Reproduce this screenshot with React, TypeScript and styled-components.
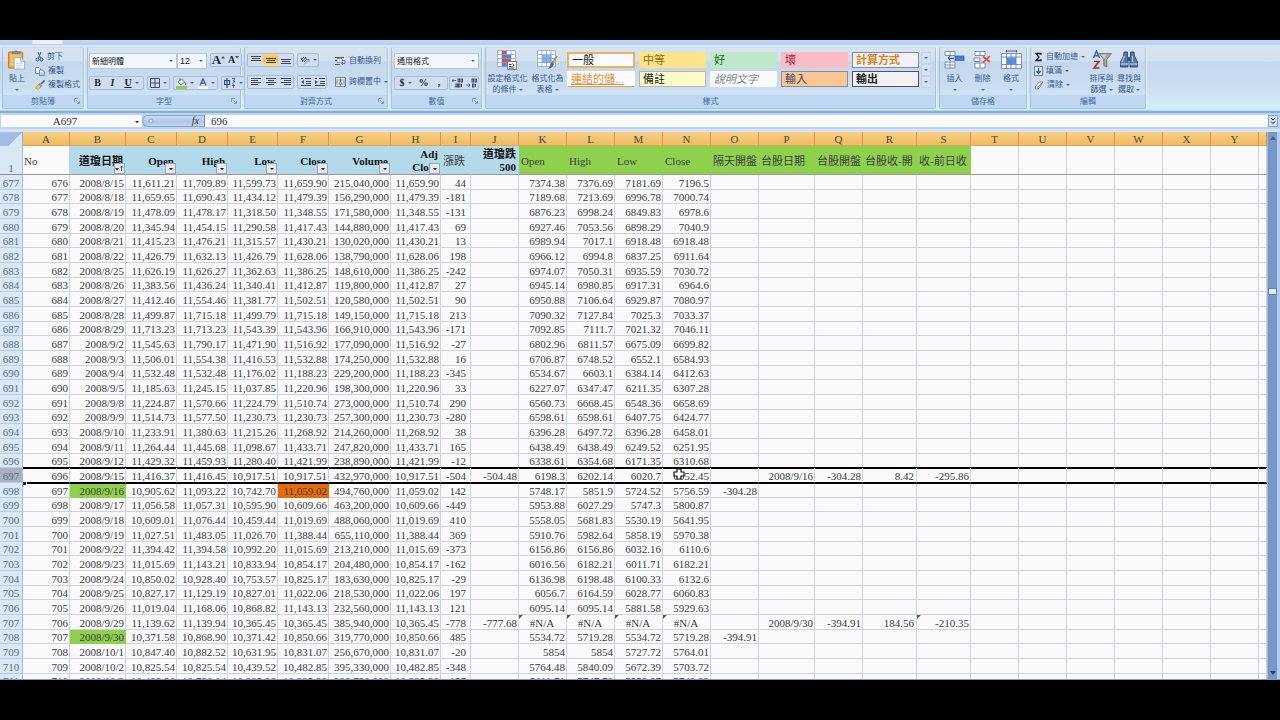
import React from 'react';
import styled, { createGlobalStyle, css } from 'styled-components';

const Global = createGlobalStyle`
  * { box-sizing: border-box; }
  body { margin: 0; background: #000; font-family: "Liberation Sans", "Noto Sans CJK TC", sans-serif; }
  button, input, select { font: inherit; color: inherit; margin: 0; padding: 0; border: 0; background: none; border-radius: 0; }
`;

const serif = '"Liberation Serif", "Noto Sans CJK TC", serif';

const Page = styled.main`
  height: 100vh;
  padding: 40px 0;
  background: #000;
`;
const Window = styled.div`
  height: 100%;
  display: flex;
  flex-direction: column;
  overflow: hidden;
  background: #bcd5f3;
`;
const TabStrip = styled.nav`
  flex: none;
  display: flex;
  height: 5px;
  padding-left: 32px;
  background: linear-gradient(#bddcfb, #b4d2f5);
  border-bottom: 1px solid #c3d3ea;
`;
const ActiveTab = styled.span`
  width: 31px;
  background: #e6effa;
  border: 1px solid #d4e6fb;
  border-width: 0 1px;
`;

/* ---------- ribbon ---------- */
const Ribbon = styled.section`
  flex: none;
  display: flex;
  gap: 3px;
  height: 66px;
  padding: 2px 2px 1px;
  background: linear-gradient(#d9e4f2 0, #d3dfef 16px, #c5d6eb 17px, #cbdff2 45px, #d3ebf8 60px, #c8f0fa 66px);
  border-bottom: 1px solid #b4dcef;
  overflow: hidden;
`;
const GroupBox = styled.section<{ $w: number }>`
  flex: none;
  width: ${p => p.$w}px;
  display: flex;
  flex-direction: column;
  border: 1px solid #a9c1dd;
  border-top-color: #cfdcec;
  border-radius: 2px;
  box-shadow: 1px 0 0 #eaf3fb;
`;
const GroupBody = styled.div<{ $gap?: number; $pad?: number }>`
  flex: 1;
  min-height: 0;
  display: flex;
  gap: ${p => p.$gap ?? 4}px;
  padding: 2px ${p => p.$pad ?? 4}px 0;
`;
const GroupLabel = styled.footer`
  flex: none;
  position: relative;
  height: 13px;
  line-height: 14px;
  background: #bfd7f2;
  color: #4468a3;
  font-size: 8px;
  text-align: center;
`;
const Launcher = styled.button`
  position: absolute;
  right: 3px;
  top: 3px;
  width: 6px;
  height: 6px;
  display: flex;
`;
const Col = styled.div<{ $gap?: number; $top?: number }>`
  display: flex;
  flex-direction: column;
  gap: ${p => p.$gap ?? 0}px;
  padding-top: ${p => p.$top ?? 0}px;
`;
const Row = styled.div<{ $gap?: number }>`
  display: flex;
  gap: ${p => p.$gap ?? 3}px;
`;
const BigBtn = styled.button<{ $w: number }>`
  width: ${p => p.$w}px;
  display: flex;
  flex-direction: column;
  align-items: center;
  font-size: 8px;
  line-height: 10px;
  color: #35588f;
  white-space: nowrap;
  svg { flex: none; margin-bottom: 3px; }
`;
const BigText = styled.span`
  display: flex;
  align-items: center;
  gap: 2px;
  height: 10px;
  margin-top: 1px;
`;
const SmallBtn = styled.button<{ $h?: number }>`
  height: ${p => p.$h ?? 14}px;
  display: flex;
  align-items: center;
  gap: 3px;
  font-size: 8px;
  line-height: 12px;
  color: #35588f;
  white-space: nowrap;
`;
const Tri = styled.i<{ $dark?: boolean }>`
  flex: none;
  width: 0;
  height: 0;
  border: 2px solid transparent;
  border-top-color: ${p => (p.$dark ? '#111' : '#4a6a9a')};
  border-bottom: 0;
`;
const Field = styled.label<{ $w: number; $size?: number }>`
  position: relative;
  display: flex;
  align-items: center;
  width: ${p => p.$w}px;
  height: 16px;
  background: #f1f6fd;
  border: 1px solid #b3c8e4;
  font-size: ${p => p.$size ?? 8}px;
  color: #222;
  select { appearance: none; flex: 1; width: 0; height: 100%; padding-left: 2px; }
  i { position: absolute; right: 3px; top: 6px; }
`;
const ToolBox = styled.div`
  display: flex;
  height: 14px;
  border: 1px solid #a5bddd;
  border-radius: 2px;
  background: #cfddef;
`;
const Tool = styled.button<{ $w: number; $on?: boolean; $size?: number; $gap?: number; $look?: 'bold' | 'italic' | 'under' }>`
  width: ${p => p.$w}px;
  display: flex;
  align-items: center;
  justify-content: center;
  gap: ${p => p.$gap ?? 3}px;
  && {
    font-family: "Liberation Serif", serif;
    font-size: ${p => p.$size ?? 10}px;
    font-weight: bold;
    line-height: 12px;
    color: #1d2430;
    ${p => p.$on && css`background: linear-gradient(#fbd38e, #f9b64c 50%, #fde08a);`}
    ${p => p.$look === 'italic' && css`font-style: italic;`}
    ${p => p.$look === 'under' && css`text-decoration: underline;`}
  }
`;
const Divider = styled.span`
  width: 1px;
  margin: 4px 0 6px;
  background: #9db6d6;
`;
const Gallery = styled.div`
  display: grid;
  grid-template-columns: 68px repeat(4, 67px);
  grid-auto-rows: 16px;
  gap: 3px 4px;
  padding-top: 2px;
`;
const StyleCell = styled.button<{ $bg: string; $fg: string; $edge?: string; $look?: string }>`
  && {
    padding-left: 3px;
    text-align: left;
    font-size: 11px;
    line-height: 13px;
    white-space: nowrap;
    overflow: hidden;
    background: ${p => p.$bg};
    color: ${p => p.$fg};
    border: 1px solid ${p => p.$edge ?? p.$bg};
    ${p => p.$look === 'current' && css`border: 2px solid #e8b35c; line-height: 12px;`}
    ${p => p.$look === 'bold' && css`font-weight: bold;`}
    ${p => p.$look === 'italic' && css`font-style: italic;`}
    ${p => p.$look === 'link' && css`border-bottom: 1px solid #e6a050; text-decoration: underline;`}
  }
`;
const GalleryNav = styled.div`
  display: flex;
  flex-direction: column;
  width: 10px;
  margin-top: 2px;
  height: 36px;
  button {
    flex: 1;
    display: flex;
    align-items: center;
    justify-content: center;
    border: 1px solid #c3d3e8;
    background: #d5e1f0;
  }
`;

/* ---------- formula bar ---------- */
const FormulaBar = styled.div`
  flex: none;
  display: flex;
  height: 21px;
  padding: 2px 2px 2px 1px;
  border-top: 2px solid #8badcf;
  border-bottom: 3px solid #d4e3f6;
  background: #bdd3ef;
  font-family: ${serif};
  font-size: 11px;
  color: #333;
`;
const NameBox = styled.label`
  position: relative;
  display: flex;
  width: 141px;
  background: #fafbfd;
  input { width: 128px; text-align: center; }
  i { position: absolute; right: 3px; top: 6px; }
`;
const FxArea = styled.div`
  display: flex;
  align-items: center;
  justify-content: space-between;
  width: 62px;
  padding: 0 5px;
  border: 1px solid #86a5d0;
  border-right: 0;
  border-radius: 7px 0 0 7px;
  background: linear-gradient(#cadbf2, #aec6e8 60%, #c4d6ee);
  button { font-style: italic; font-size: 10px; line-height: 12px; }
`;
const FormulaInput = styled.input`
  && {
    flex: 1;
    min-width: 0;
    padding-left: 6px;
    background: #fafbfd;
    border-left: 1px solid #6d88b0;
  }
`;
const ExpandBtn = styled.button`
  && {
    width: 10px;
    display: flex;
    align-items: center;
    justify-content: center;
    border: 1px solid #86a5d0;
    background: #d3e2f6;
  }
`;

/* ---------- sheet ---------- */
const SheetArea = styled.div`
  flex: 1;
  min-height: 0;
  display: flex;
  overflow: hidden;
  border-bottom: 1px solid #7f9dc0;
`;
const GridPane = styled.div`
  flex: 1;
  min-width: 0;
  overflow: hidden;
  background: #fafafc;
`;
const Table = styled.table`
  width: 100%;
  table-layout: fixed;
  border-collapse: separate;
  border-spacing: 0;
  font-family: ${serif};
  font-size: 11px;
  color: #3c3c3e;
`;
const ColHead = styled.th`
  height: 14px;
  padding: 2px 0 0;
  font-weight: normal;
  line-height: 11px;
  color: #4c453a;
  background: linear-gradient(#f8cf85, #f0bb62);
  border-right: 1px solid #de9350;
  border-bottom: 1px solid #e0a452;
`;
const Corner = styled.th`
  padding: 0;
  background: linear-gradient(135deg, #a3bce6 0 62%, #dbe7f8 62%);
  border-right: 1px solid #8fb0da;
`;
const RowHead = styled.th<{ $sel?: boolean; $top?: boolean }>`
  padding: 2px 0 0;
  font-weight: normal;
  line-height: 11px;
  vertical-align: ${p => (p.$top ? 'bottom' : 'middle')};
  color: #56707f;
  background: ${p => (p.$sel ? '#aab0c2' : '#d9e8f4')};
  border-right: 1px solid #9cc0dc;
  border-bottom: 1px solid ${p => (p.$top ? '#8c8c92' : '#b0cfe4')};
`;
const FieldHead = styled.td<{ $kind: string }>`
  position: relative;
  height: 29px;
  padding: 2px 2px 0 1px;
  line-height: 13px;
  white-space: nowrap;
  border-bottom: 1px solid #97979d;
  border-right: 1px solid #cdd0e0;
  ${p => p.$kind === 'blue' && css`background: #b3d9ea; border-right-color: #b3d9ea; font-weight: bold; text-align: right; color: #111;`}
  ${p => p.$kind === 'blueLight' && css`background: #b3d9ea; border-right-color: #b3d9ea; padding-left: 2px;`}
  ${p => p.$kind === 'green' && css`background: #8fd14f; border-right-color: #8fd14f; padding-left: 2px;`}
`;
const FilterBtn = styled.button`
  position: absolute;
  right: 0;
  bottom: 0;
  width: 11px;
  height: 11px;
  display: flex;
  align-items: center;
  justify-content: center;
  && { background: #e4e9f2; border: 1px solid #a0a4b0; }
`;
const BodyRow = styled.tr<{ $h: number }>`
  height: ${p => p.$h}px;
`;
const Cell = styled.td<{ $bg?: string; $align?: string; $pad?: number; $sel?: boolean; $flag?: boolean }>`
  position: relative;
  padding: 2px ${p => p.$pad ?? 1}px 0 0;
  line-height: 11px;
  white-space: nowrap;
  text-align: ${p => p.$align ?? 'right'};
  border-right: 1px solid #d0d2e0;
  border-bottom: 1px solid #cfd0e0;
  ${p => p.$bg && css`background: ${p.$bg}; border-color: ${p.$bg};`}
  ${p => p.$sel && css`z-index: 1; border-bottom-color: #000; box-shadow: 0 -1px 0 #000, 0 1px 0 #000, inset 0 1px 0 #000;`}
  ${p => p.$flag && css`
    &::before {
      content: "";
      position: absolute;
      left: 0;
      top: 0;
      border-top: 4px solid #2c7a35;
      border-right: 4px solid transparent;
    }
  `}
`;
const FillHandle = styled.i`
  position: absolute;
  left: 0;
  bottom: -3px;
  width: 4px;
  height: 4px;
  background: #222;
  border: 1px solid #fff;
  border-width: 1px 1px 0 0;
`;
const Pointer = styled.svg`
  position: absolute;
  left: 10px;
  top: 0;
`;
const ScrollBar = styled.div`
  flex: none;
  width: 13px;
  display: flex;
  flex-direction: column;
  align-items: center;
  padding: 4px 0 4px;
  background: #7797c6;
  border-left: 1px solid #9bb6dc;
  border-right: 3px solid #aecbf2;
  button { display: flex; }
`;
const Track = styled.div`
  flex: 1;
  width: 100%;
  display: flex;
  flex-direction: column;
`;
const TrackBefore = styled.span`flex: 148;`;
const TrackAfter = styled.span`flex: 377;`;
const Thumb = styled.span`
  height: 7px;
  background: #e3edfa;
  border: 1px solid #5e7cae;
`;

/* ---------- icons ---------- */
const PasteIcon = () => (
  <svg width="20" height="20" viewBox="0 0 20 21">
    <rect x="1" y="2" width="15" height="17" rx="1" fill="#e9a940" stroke="#b77c24" />
    <rect x="3" y="4" width="11" height="13" fill="#f3c46a" />
    <path d="M5 4V2h2l1-1h2l1 1h2v2z" fill="#8b93a3" stroke="#5b6474" strokeWidth=".6" />
    <path d="M7 8h7l4 4v8H7z" fill="#fbfcff" stroke="#8b9dbd" strokeWidth=".8" />
    <path d="M14 8v4h4" fill="#d5e0f2" stroke="#8b9dbd" strokeWidth=".8" />
    <path d="M9 14h7M9 16h7M9 18h5" stroke="#a9bbd8" strokeWidth=".7" />
  </svg>
);
const CutIcon = () => (
  <svg width="9" height="10" viewBox="0 0 9 10" fill="none">
    <path d="M3 0l2.500 6M6 0L3.500 6" stroke="#3c4f77" />
    <circle cx="2.500" cy="7.500" r="1.500" stroke="#2d4e9b" /><circle cx="6.500" cy="7.500" r="1.500" stroke="#2d4e9b" />
  </svg>
);
const CopyIcon = () => (
  <svg width="10" height="9" viewBox="0 0 10 9" fill="#f4f8ff" stroke="#4f6fa8" strokeWidth=".8">
    <path d="M.5.5h3.500L5.500 2v4.500h-5z" /><path d="M4.500 3h3l2 2v3.500h-5z" /><path d="M5.500 6h3M5.500 7.200h3" strokeWidth=".5" />
  </svg>
);
const BrushIcon = () => (
  <svg width="10" height="10" viewBox="0 0 10 10">
    <path d="M9.500.5L6 4" stroke="#3f5fa0" strokeWidth="1.600" /><path d="M4.500 3l3 3-1.500 1L3.500 4.500z" fill="#8b93a3" />
    <path d="M3.500 4.500L6 7 3 9.500.5 8z" fill="#f1cf4e" stroke="#a8862a" strokeWidth=".6" />
  </svg>
);
const LaunchIcon = () => (
  <svg width="6" height="6" viewBox="0 0 6 6" fill="none" stroke="#6c8cb8"><path d="M.5 4V.5H4M2.500 2.500L5 5M5.500 3v2.500H3" strokeWidth=".8" /></svg>
);
const BorderIcon = () => (
  <svg width="10" height="10" viewBox="0 0 10 10" fill="none" stroke="#3f4c63"><path d="M.5.5h9v9h-9zM5 .5v9M.5 5h9" /></svg>
);
const FillIcon = () => (
  <svg width="11" height="11" viewBox="0 0 11 11">
    <path d="M2 4l3.500-3 3 3-3.500 3z" fill="#eef3fa" stroke="#56657f" strokeWidth=".8" /><path d="M4 0v3" stroke="#56657f" strokeWidth=".8" />
    <path d="M8.500 4q2 1 1 3" stroke="#3b66b5" fill="none" /><rect y="8" width="11" height="3" fill="#8fd14f" />
  </svg>
);
const FontColorIcon = () => (
  <svg width="10" height="11" viewBox="0 0 10 11">
    <path d="M2 7.500L5 .8l3 6.700M3 5.200h4" stroke="#3a5fa8" strokeWidth="1.300" fill="none" /><rect y="8.500" width="10" height="2.500" fill="#f7f8fa" />
  </svg>
);
const LinesIcon = ({ rows, w = 10 }: { rows: [number, number, number][]; w?: number }) => (
  <svg width={w} height="10" viewBox={`0 0 ${w} 10`} stroke="#43464f">
    {rows.map(([x1, x2, y]) => <path key={y} d={`M${x1} ${y + 0.5}H${x2}`} />)}
  </svg>
);
const OrientIcon = () => (
  <svg width="10" height="10" viewBox="0 0 10 10" fill="none" stroke="#3f4c63">
    <path d="M1 5l3-3M2 7l4-5M4 7l3-3M1 3l2 3M5 2l2 3" strokeWidth=".9" /><path d="M4 9.500l5-5M9 7V4.500H6.500" stroke="#6c7c96" strokeWidth=".8" />
  </svg>
);
const IndentIcon = ({ right }: { right?: boolean }) => (
  <svg width="11" height="10" viewBox="0 0 11 10" stroke="#43464f">
    <path d="M5 1.500h6M6 4.500h5M6 6.500h5M1 8.500h10M1 1.500h2" /><path d={right ? 'M1 3v4l3-2z' : 'M4 3v4L1 5z'} fill="#2f5cb0" stroke="none" />
  </svg>
);
const WrapIcon = () => (
  <svg width="11" height="10" viewBox="0 0 11 10" fill="none">
    <path d="M0 1.500h9M0 4.500h8M0 8.500h5" stroke="#53585f" /><path d="M2 2.500h5v4H2z" fill="#dfe7f2" stroke="#777f8c" strokeWidth=".7" />
    <path d="M8 4.500h2v3H6.500M8 6L6.500 7.500 8 9" stroke="#55617a" strokeWidth=".8" />
  </svg>
);
const MergeIcon = () => (
  <svg width="11" height="10" viewBox="0 0 11 10">
    <path d="M.5.5h10v9H.5zM.5 3h10M.5 7h10M5.500.5V3M5.500 7v2.500" fill="#fbfcfe" stroke="#5c6b84" strokeWidth=".8" />
    <path d="M1 5h2M8 5h2" stroke="#2f5cb0" /><path d="M4.500 6.500l1-3 1 3" stroke="#222" strokeWidth=".7" fill="none" />
  </svg>
);
const DecimalIcon = ({ less }: { less?: boolean }) => (
  <svg width="11" height="10" viewBox="0 0 11 10" fill="none" stroke="#343c4e" strokeWidth=".9">
    <path d={less ? 'M0 7h4M2.500 5.500L4 7 2.500 8.500' : 'M0 2.500h4M1.500 1L0 2.500 1.500 4'} stroke="#2f5cb0" />
    <rect x="6" y="1" width="1.500" height="3" /><rect x="9" y="1" width="1.500" height="3" />
    {!less && <rect x="4" y="6" width="1.500" height="3" />}
    <rect x="6.500" y="6" width="1.500" height="3" /><path d="M9.500 9V6M2.800 8.800h.8" />
  </svg>
);
const grid = 'M.5.5h18v16H.5zM.5 4.500h18M.5 8.500h18M.5 12.500h18M5 .5v16M9.500.5v16M14 .5v16';
const CondIcon = () => (
  <svg width="21" height="20" viewBox="0 0 21 20">
    <path d={grid} fill="#fafcff" stroke="#8ea5cc" strokeWidth=".8" />
    <path d="M5 1h4.500v3.500H5zM5 9h9v3.500H5z" fill="#e0503f" /><path d="M5 5h9v3.500H5zM5 13h4.500v3.500H5z" fill="#4f86d8" />
    <rect x="10.500" y="11.500" width="9" height="8" fill="#f4f5f7" stroke="#77808f" />
    <path d="M12 14.500h2.500M12 16.500h2.500M15.500 13.500L17 15l-1.500 1.500M12 18h5" stroke="#333" strokeWidth=".9" fill="none" />
  </svg>
);
const TableIcon = () => (
  <svg width="21" height="20" viewBox="0 0 21 20">
    <path d={grid} fill="#fafcff" stroke="#8ea5cc" strokeWidth=".8" /><path d="M5 5h9.500v8H5z" fill="#6d9fe2" opacity=".8" />
    <path d="M20 6l-5 7" stroke="#c08a48" strokeWidth="2" /><path d="M15.500 12l1.500 2q-1 4-6 5 2-2 2.500-5.500z" fill="#596a87" />
  </svg>
);
const InsertIcon = () => (
  <svg width="21" height="20" viewBox="0 0 21 20">
    <path d="M1 1.500h10v4H1zM6 1.500v4M1 12h10v6H1zM6 12v6M1 15h10" fill="#fafcff" stroke="#7286ab" strokeWidth=".9" />
    <rect x="11" y="6" width="9" height="4.500" fill="#4b7fd9" stroke="#2e55a5" strokeWidth=".7" /><path d="M10 8.300H4M6.500 6L4 8.300l2.500 2.200" stroke="#27406f" fill="none" />
  </svg>
);
const DeleteIcon = () => (
  <svg width="19" height="20" viewBox="0 0 19 20">
    <path d="M2 1.500h10v4H2zM7 1.500v4M2 13h10v5H2zM7 13v5M1 8h6v3.500H1z" fill="#fafcff" stroke="#7286ab" strokeWidth=".9" />
    <path d="M10 6.500l7 5.500M17 6l-7 6.500" stroke="#e04a33" strokeWidth="1.700" />
  </svg>
);
const FormatIcon = () => (
  <svg width="21" height="20" viewBox="0 0 21 20">
    <path d="M.5 3.500h20v15H.5zM.5 7h20M.5 14.500h20M5.500 3v15.500M15 3v15.500M10 3v15.500" fill="#fafcff" stroke="#7286ab" strokeWidth=".9" />
    <rect x="6" y="7.500" width="9" height="7" fill="#5a8fe0" /><path d="M5.500 1h10M5.500 0v2.500M15.500 0v2.500" stroke="#4a5f8a" />
  </svg>
);
const FillDownIcon = () => (
  <svg width="9" height="10" viewBox="0 0 9 10"><rect x=".5" y=".5" width="8" height="9" fill="#e9f1fc" stroke="#6581b3" /><path d="M4.500 2v5M2.300 5l2.200 2.500L6.700 5" stroke="#2456b5" strokeWidth="1.300" fill="none" /></svg>
);
const EraserIcon = () => (
  <svg width="10" height="9" viewBox="0 0 10 9"><path d="M1 6l4-5h4L5.500 6.500 4 8H1.500z" fill="#f7f8fb" stroke="#5d6e8d" strokeWidth=".8" /><path d="M1 6h3l4.500-4.500M4 6v2" stroke="#5d6e8d" strokeWidth=".7" fill="none" /></svg>
);
const SortIcon = () => (
  <svg width="20" height="20" viewBox="0 0 20 20">
    <path d="M1.500 8L4.500 1l3 7M2.500 5.800h4" stroke="#3767b8" strokeWidth="1.500" fill="none" />
    <path d="M2 11.500h5L2 18h5.500" stroke="#a82f2f" strokeWidth="1.600" fill="none" />
    <path d="M7 3.500h12.500l-4.700 6V17l-3-1.500v-6z" fill="#a8a49e" stroke="#6e6a66" strokeWidth=".8" /><path d="M9 4.500h5l-1.500 4" fill="#d9d6d0" />
  </svg>
);
const FindIcon = () => (
  <svg width="20" height="20" viewBox="0 0 20 20">
    <path d="M5 2h3.500v4L9 9v8H1.500v-5L4.500 6zM15 2h-3.500v4L11 9v8h7.500v-5l-3-6z" fill="#5877a8" stroke="#2c4470" strokeWidth=".9" />
    <rect x="8.500" y="7" width="3" height="4" fill="#3a5688" /><path d="M3 12l2.500-6M13.500 12V6" stroke="#b4c8e8" strokeWidth="1.200" /><path d="M1.500 14H9M11 14h7.500" stroke="#dbe6f5" />
  </svg>
);

/* ---------- data ---------- */
const widths = [47, 56, 51, 51, 50, 51, 62, 50, 30, 48, 48, 48, 48, 48, 48, 56, 48, 54, 54, 48, 48, 48, 48, 48, 48];
const letters = 'ABCDEFGHIJKLMNOPQRSTUVWXY'.split('');

type HeadField = { text: string[]; kind: string; filter?: 'plain' | 'sorted' };
const fields: HeadField[] = [
  { text: ['No'], kind: 'plain' },
  { text: ['道瓊日期'], kind: 'blue', filter: 'sorted' },
  { text: ['Open'], kind: 'blue', filter: 'plain' },
  { text: ['High'], kind: 'blue', filter: 'plain' },
  { text: ['Low'], kind: 'blue', filter: 'plain' },
  { text: ['Close'], kind: 'blue', filter: 'plain' },
  { text: ['Volume'], kind: 'blue', filter: 'plain' },
  { text: ['Adj', 'Close'], kind: 'blue', filter: 'plain' },
  { text: ['漲跌'], kind: 'blueLight' },
  { text: ['道瓊跌', '500'], kind: 'blue' },
  ...['Open', 'High', 'Low', 'Close', '隔天開盤', '台股日期', '台股開盤', '台股收-開', '收-前日收'].map(t => ({ text: [t], kind: 'green' })),
];

/* date, open, high, low, close, volume, change, then the four index prices */
const source = `
8/15 11,611.21 11,709.89 11,599.73 11,659.90 215,040,000 44 7374.38 7376.69 7181.69 7196.5
8/18 11,659.65 11,690.43 11,434.12 11,479.39 156,290,000 -181 7189.68 7213.69 6996.78 7000.74
8/19 11,478.09 11,478.17 11,318.50 11,348.55 171,580,000 -131 6876.23 6998.24 6849.83 6978.6
8/20 11,345.94 11,454.15 11,290.58 11,417.43 144,880,000 69 6927.46 7053.56 6898.29 7040.9
8/21 11,415.23 11,476.21 11,315.57 11,430.21 130,020,000 13 6989.94 7017.1 6918.48 6918.48
8/22 11,426.79 11,632.13 11,426.79 11,628.06 138,790,000 198 6966.12 6994.8 6837.25 6911.64
8/25 11,626.19 11,626.27 11,362.63 11,386.25 148,610,000 -242 6974.07 7050.31 6935.59 7030.72
8/26 11,383.56 11,436.24 11,340.41 11,412.87 119,800,000 27 6945.14 6980.85 6917.31 6964.6
8/27 11,412.46 11,554.46 11,381.77 11,502.51 120,580,000 90 6950.88 7106.64 6929.87 7080.97
8/28 11,499.87 11,715.18 11,499.79 11,715.18 149,150,000 213 7090.32 7127.84 7025.3 7033.37
8/29 11,713.23 11,713.23 11,543.39 11,543.96 166,910,000 -171 7092.85 7111.7 7021.32 7046.11
9/2 11,545.63 11,790.17 11,471.90 11,516.92 177,090,000 -27 6802.96 6811.57 6675.09 6699.82
9/3 11,506.01 11,554.38 11,416.53 11,532.88 174,250,000 16 6706.87 6748.52 6552.1 6584.93
9/4 11,532.48 11,532.48 11,176.02 11,188.23 229,200,000 -345 6534.67 6603.1 6384.14 6412.63
9/5 11,185.63 11,245.15 11,037.85 11,220.96 198,300,000 33 6227.07 6347.47 6211.35 6307.28
9/8 11,224.87 11,570.66 11,224.79 11,510.74 273,000,000 290 6560.73 6668.45 6548.36 6658.69
9/9 11,514.73 11,577.50 11,230.73 11,230.73 257,300,000 -280 6598.61 6598.61 6407.75 6424.77
9/10 11,233.91 11,380.63 11,215.26 11,268.92 214,260,000 38 6396.28 6497.72 6396.28 6458.01
9/11 11,264.44 11,445.68 11,098.67 11,433.71 247,820,000 165 6438.49 6438.49 6249.52 6251.95
9/12 11,429.32 11,459.93 11,280.40 11,421.99 238,890,000 -12 6338.61 6354.68 6171.35 6310.68
9/15 11,416.37 11,416.45 10,917.51 10,917.51 432,970,000 -504 6198.3 6202.14 6020.7 6052.45
9/16 10,905.62 11,093.22 10,742.70 11,059.02 494,760,000 142 5748.17 5851.9 5724.52 5756.59
9/17 11,056.58 11,057.31 10,595.90 10,609.66 463,200,000 -449 5953.88 6027.29 5747.3 5800.87
9/18 10,609.01 11,076.44 10,459.44 11,019.69 488,060,000 410 5558.05 5681.83 5530.19 5641.95
9/19 11,027.51 11,483.05 11,026.70 11,388.44 655,110,000 369 5910.76 5982.64 5858.19 5970.38
9/22 11,394.42 11,394.58 10,992.20 11,015.69 213,210,000 -373 6156.86 6156.86 6032.16 6110.6
9/23 11,015.69 11,143.21 10,833.94 10,854.17 204,480,000 -162 6016.56 6182.21 6011.71 6182.21
9/24 10,850.02 10,928.40 10,753.57 10,825.17 183,630,000 -29 6136.98 6198.48 6100.33 6132.6
9/25 10,827.17 11,129.19 10,827.01 11,022.06 218,530,000 197 6056.7 6164.59 6028.77 6060.83
9/26 11,019.04 11,168.06 10,868.82 11,143.13 232,560,000 121 6095.14 6095.14 5881.58 5929.63
9/29 11,139.62 11,139.94 10,365.45 10,365.45 385,940,000 -778 #N/A #N/A #N/A #N/A
9/30 10,371.58 10,868.90 10,371.42 10,850.66 319,770,000 485 5534.72 5719.28 5534.72 5719.28
10/1 10,847.40 10,882.52 10,631.95 10,831.07 256,670,000 -20 5854 5854 5727.72 5764.01
10/2 10,825.54 10,825.54 10,439.52 10,482.85 395,330,000 -348 5764.48 5840.09 5672.39 5703.72
10/3 10,483.96 10,786.14 10,325.38 10,325.38 328,790,000 -157 5611.71 5747.70 5559.27 5742.23`;

const extras: Record<string, string> = {
  '697J': '-504.48', '697P': '2008/9/16', '697Q': '-304.28', '697R': '8.42', '697S': '-295.86',
  '698O': '-304.28', '707J': '-777.68', '707P': '2008/9/30', '707Q': '-394.91', '707R': '184.56',
  '707S': '-210.35', '708O': '-394.91',
};
const fills: Record<string, string> = { '698B': '#8fd14f', '708B': '#8fd14f', '698F': '#e26b0a' };
const SELECTED = 697;

const rows = source.trim().split('\n').map((line, i) => {
  const [date, open, high, low, close, volume, change, ...prices] = line.split(' ');
  const id = 677 + i;
  const cells = [String(id - 1), `2008/${date}`, open, high, low, close, volume, close, change, '', ...prices];
  return { id, h: i % 3 === 1 ? 14 : 15, cells: [...letters, 'Z'].map((l, c) => cells[c] || extras[id + l] || '') };
});

const Group = ({ label, w, gap, pad, launch, children }: { label: string; w: number; gap?: number; pad?: number; launch?: boolean; children: React.ReactNode }) => (
  <GroupBox $w={w} aria-label={label}>
    <GroupBody $gap={gap} $pad={pad}>{children}</GroupBody>
    <GroupLabel>{label}{launch && <Launcher aria-label={`${label}選項`}><LaunchIcon /></Launcher>}</GroupLabel>
  </GroupBox>
);
const Big = ({ icon, lines, w, arrow }: { icon: React.ReactNode; lines: string[]; w: number; arrow?: 'below' | 'inline' }) => (
  <BigBtn $w={w}>
    {icon}
    {lines.map((t, i) => <BigText key={t}>{t}{arrow === 'inline' && i === lines.length - 1 && <Tri />}</BigText>)}
    {arrow === 'below' && <BigText><Tri /></BigText>}
  </BigBtn>
);
const Caret = ({ down }: { down?: boolean }) => (
  <svg width="4" height="10" viewBox="0 0 4 10"><path d={down ? 'M0 1h4L2 3.500z' : 'M0 3.500h4L2 1z'} fill="#2f4f8a" /></svg>
);

export default function App() {
  return (
    <Page>
      <Global />
      <Window>
        <TabStrip aria-label="索引標籤"><ActiveTab /></TabStrip>
        <Ribbon>
          <Group label="剪貼簿" w={82} launch gap={7} pad={3}>
            <Big icon={<PasteIcon />} lines={['貼上']} w={24} arrow="below" />
            <Col>
              <SmallBtn><CutIcon />剪下</SmallBtn>
              <SmallBtn><CopyIcon />複製</SmallBtn>
              <SmallBtn><BrushIcon />複製格式</SmallBtn>
            </Col>
          </Group>
          <Group label="字型" w={154} launch pad={1}>
            <Col $gap={7} $top={3}>
              <Row>
                <Row $gap={0}>
                  <Field $w={88}><select aria-label="字型名稱"><option>新細明體</option></select><Tri /></Field>
                  <Field $w={30} $size={9}><select aria-label="字型大小"><option>12</option></select><Tri /></Field>
                </Row>
                <ToolBox>
                  <Tool $w={15} $size={13} $gap={0} aria-label="放大字型">A<Caret /></Tool>
                  <Tool $w={15} $size={10} $gap={0} aria-label="縮小字型">A<Caret down /></Tool>
                </ToolBox>
              </Row>
              <Row>
                <ToolBox>
                  <Tool $w={15} $look="bold">B</Tool>
                  <Tool $w={15} $look="italic">I</Tool>
                  <Tool $w={23} $look="under">U<Tri /></Tool>
                </ToolBox>
                <ToolBox><Tool $w={21} aria-label="框線"><BorderIcon /><Tri /></Tool></ToolBox>
                <ToolBox>
                  <Tool $w={21} aria-label="填滿色彩"><FillIcon /><Tri /></Tool>
                  <Tool $w={22} aria-label="字型色彩"><FontColorIcon /><Tri /></Tool>
                </ToolBox>
                <ToolBox><Tool $w={22} aria-label="注音標示"><svg width="12" height="12" viewBox="0 0 12 12" fill="none" stroke="#2c4a86"><path d="M.5 3.500h5v4h-5zM3 1v10" strokeWidth="1.200" /><path d="M8 1.500h3L9 4h2L8.500 7M8 8.500h3M9.500 7v4" strokeWidth=".8" /></svg><Tri /></Tool></ToolBox>
              </Row>
            </Col>
          </Group>
          <Group label="對齊方式" w={144} launch pad={2}>
            <Col $gap={8} $top={3}>
              <Row>
                <ToolBox>
                  <Tool $w={15} aria-label="靠上對齊"><LinesIcon rows={[[0, 10, 1], [1, 9, 3], [0, 10, 5]]} /></Tool>
                  <Tool $w={15} $on aria-label="置中對齊"><LinesIcon rows={[[0, 10, 3], [1, 9, 5], [0, 10, 7]]} /></Tool>
                  <Tool $w={15} aria-label="靠下對齊"><LinesIcon rows={[[0, 10, 4], [1, 9, 6], [0, 10, 8]]} /></Tool>
                </ToolBox>
                <ToolBox><Tool $w={20} aria-label="方向"><OrientIcon /><Tri /></Tool></ToolBox>
              </Row>
              <Row>
                <ToolBox>
                  <Tool $w={15} aria-label="靠左對齊"><LinesIcon rows={[[0, 10, 1], [0, 7, 3], [0, 10, 5], [0, 7, 7]]} /></Tool>
                  <Tool $w={15} aria-label="水平置中"><LinesIcon rows={[[0, 10, 1], [2, 8, 3], [0, 10, 5], [2, 8, 7]]} /></Tool>
                  <Tool $w={15} aria-label="靠右對齊"><LinesIcon rows={[[0, 10, 1], [3, 10, 3], [0, 10, 5], [3, 10, 7]]} /></Tool>
                </ToolBox>
                <ToolBox>
                  <Tool $w={14} aria-label="減少縮排"><IndentIcon /></Tool>
                  <Tool $w={14} aria-label="增加縮排"><IndentIcon right /></Tool>
                </ToolBox>
              </Row>
            </Col>
            <Divider />
            <Col $gap={7} $top={4}>
              <SmallBtn><WrapIcon />自動換列</SmallBtn>
              <SmallBtn><MergeIcon />跨欄置中<Tri /></SmallBtn>
            </Col>
          </Group>
          <Group label="數值" w={91} launch pad={2}>
            <Col $gap={7} $top={3}>
              <Field $w={85}><select aria-label="數值格式"><option>通用格式</option></select><Tri /></Field>
              <Row $gap={1}>
                <ToolBox>
                  <Tool $w={21}>$<Tri /></Tool>
                  <Tool $w={15}>%</Tool>
                  <Tool $w={16}>,</Tool>
                </ToolBox>
                <ToolBox>
                  <Tool $w={14} aria-label="增加小數位數"><DecimalIcon /></Tool>
                  <Tool $w={14} aria-label="減少小數位數"><DecimalIcon less /></Tool>
                </ToolBox>
              </Row>
            </Col>
          </Group>
          <Group label="樣式" w={451} gap={2} pad={1}>
            <Big icon={<CondIcon />} lines={['設定格式化', '的條件']} w={41} arrow="inline" />
            <Big icon={<TableIcon />} lines={['格式化為', '表格']} w={35} arrow="inline" />
            <Gallery>
              <StyleCell $bg="#fbfbfd" $fg="#222" $look="current">一般</StyleCell>
              <StyleCell $bg="#fde38c" $fg="#8f6a10">中等</StyleCell>
              <StyleCell $bg="#bfe8c8" $fg="#1b6a25">好</StyleCell>
              <StyleCell $bg="#fbbcc6" $fg="#98202c">壞</StyleCell>
              <StyleCell $bg="#f2f2f4" $fg="#e0801c" $edge="#7f8ba3" $look="bold">計算方式</StyleCell>
              <StyleCell $bg="#fbfbfd" $fg="#e3923a" $look="link">連結的儲...</StyleCell>
              <StyleCell $bg="#fdfbc8" $fg="#222" $edge="#b5b8a8">備註</StyleCell>
              <StyleCell $bg="#f8fafc" $fg="#85888e" $look="italic">說明文字</StyleCell>
              <StyleCell $bg="#f9c796" $fg="#45466e" $edge="#8c8c98">輸入</StyleCell>
              <StyleCell $bg="#f1f1f4" $fg="#222" $edge="#4c5368" $look="bold">輸出</StyleCell>
            </Gallery>
            <GalleryNav>
              <button aria-label="上一列"><Tri /></button>
              <button aria-label="下一列"><Tri /></button>
              <button aria-label="其他"><Tri /></button>
            </GalleryNav>
          </Group>
          <Group label="儲存格" w={88} gap={1} pad={1}>
            <Big icon={<InsertIcon />} lines={['插入']} w={27} arrow="below" />
            <Big icon={<DeleteIcon />} lines={['刪除']} w={27} arrow="below" />
            <Big icon={<FormatIcon />} lines={['格式']} w={28} arrow="below" />
          </Group>
          <Group label="編輯" w={116} gap={3} pad={3}>
            <Col>
              <SmallBtn><svg width="9" height="10" viewBox="0 0 9 10" fill="none" stroke="#1c2230"><path d="M7 3V1.500H2l3 3.500-3 3.500h5V7" strokeWidth="1.300" /></svg>自動加總<Tri /></SmallBtn>
              <SmallBtn><FillDownIcon />填滿<Tri /></SmallBtn>
              <SmallBtn><EraserIcon />清除<Tri /></SmallBtn>
            </Col>
            <Row $gap={0}>
              <Big icon={<SortIcon />} lines={['排序與', '篩選']} w={27} arrow="inline" />
              <Big icon={<FindIcon />} lines={['尋找與', '選取']} w={28} arrow="inline" />
            </Row>
          </Group>
        </Ribbon>
        <FormulaBar>
          <NameBox><input aria-label="名稱方塊" defaultValue="A697" /><Tri $dark /></NameBox>
          <FxArea>
            <svg width="7" height="7" viewBox="0 0 7 7" fill="none" stroke="#8aa3c8"><circle cx="3" cy="3" r="2" fill="#e2ecf9" /></svg>
            <button>fx</button>
          </FxArea>
          <FormulaInput aria-label="資料編輯列" defaultValue="696" />
          <ExpandBtn aria-label="展開資料編輯列"><svg width="6" height="8" viewBox="0 0 6 8" fill="none" stroke="#111"><path d="M1 1l2 2 2-2M1 4.500l2 2 2-2" /></svg></ExpandBtn>
        </FormulaBar>
        <SheetArea>
          <GridPane>
            <Table>
              <colgroup>
                <col width={23} />
                {widths.map((w, i) => <col key={i} width={w} />)}
                <col />
              </colgroup>
              <thead>
                <tr>
                  <Corner />
                  {letters.map(l => <ColHead key={l} scope="col">{l}</ColHead>)}
                  <ColHead />
                </tr>
              </thead>
              <tbody>
                <tr>
                  <RowHead $top scope="row">1</RowHead>
                  {[...letters, 'Z'].map((l, c) => {
                    const f = fields[c];
                    return (
                      <FieldHead key={l} $kind={f ? f.kind : 'plain'}>
                        {f?.text.map(t => <div key={t}>{t}</div>)}
                        {f?.filter && (
                          <FilterBtn aria-label={`篩選 ${f.text.join(' ')}`}>
                            {f.filter === 'sorted'
                              ? <svg width="9" height="7" viewBox="0 0 9 7"><path d="M0 3h4L2 5.500z" fill="#333" /><path d="M6.500 6V1M5.300 2.500L6.500 1l1.200 1.500" stroke="#333" strokeWidth=".8" fill="none" /></svg>
                              : <Tri $dark />}
                          </FilterBtn>
                        )}
                      </FieldHead>
                    );
                  })}
                </tr>
                {rows.map(r => (
                  <BodyRow key={r.id} $h={r.h}>
                    <RowHead $sel={r.id === SELECTED} scope="row">{r.id}</RowHead>
                    {r.cells.map((text, c) => {
                      const l = letters[c] ?? 'Z';
                      const na = text === '#N/A';
                      return (
                        <Cell
                          key={l}
                          $bg={fills[r.id + l]}
                          $align={na ? 'center' : undefined}
                          $pad={l === 'I' ? 4 : l === 'R' ? 2 : 1}
                          $sel={r.id === SELECTED}
                          $flag={na || (r.id === 707 && l === 'S')}
                        >
                          {text}
                          {r.id === SELECTED && l === 'A' && <FillHandle />}
                          {r.id === SELECTED && l === 'N' && (
                            <Pointer width="12" height="12" viewBox="0 0 12 12" aria-hidden="true">
                              <path d="M4 1h4v3h3v4H8v3H4V8H1V4h3z" fill="#fff" stroke="#111" strokeWidth="1.200" />
                            </Pointer>
                          )}
                        </Cell>
                      );
                    })}
                  </BodyRow>
                ))}
              </tbody>
            </Table>
          </GridPane>
          <ScrollBar>
            <button aria-label="向上捲動"><svg width="6" height="4" viewBox="0 0 6 4"><path d="M0 4l3-4 3 4z" fill="#48628f" /></svg></button>
            <Track><TrackBefore /><Thumb /><TrackAfter /></Track>
            <button aria-label="向下捲動"><svg width="6" height="4" viewBox="0 0 6 4"><path d="M0 0h6L3 4z" fill="#2c3f63" /></svg></button>
          </ScrollBar>
        </SheetArea>
      </Window>
    </Page>
  );
}
